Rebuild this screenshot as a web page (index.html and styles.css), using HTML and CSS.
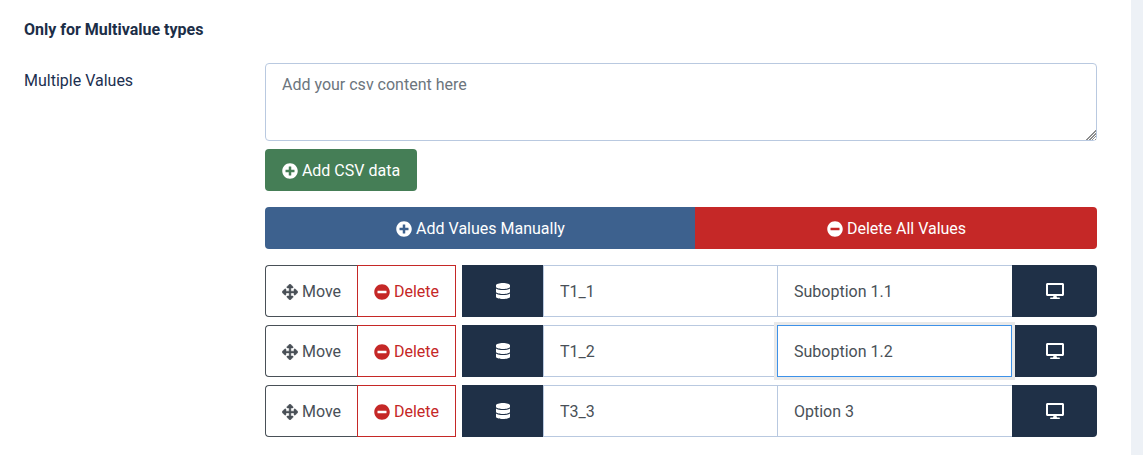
FILE: index.html
```html
<!DOCTYPE html>
<html lang="en">
<head>
<meta charset="utf-8">
<title>Only for Multivalue types</title>
<link rel="stylesheet" href="styles.css">
</head>
<body>
<svg class="defs" aria-hidden="true">
  <symbol id="i-plus" viewBox="0 0 512 512"><path d="M256 8C119 8 8 119 8 256s111 248 248 248 248-111 248-248S393 8 256 8zm144 276c0 6.6-5.4 12-12 12h-92v92c0 6.6-5.4 12-12 12h-56c-6.6 0-12-5.4-12-12v-92h-92c-6.6 0-12-5.4-12-12v-56c0-6.6 5.4-12 12-12h92v-92c0-6.6 5.4-12 12-12h56c6.6 0 12 5.4 12 12v92h92c6.6 0 12 5.4 12 12v56z"/></symbol>
  <symbol id="i-minus" viewBox="0 0 512 512"><path d="M256 8C119 8 8 119 8 256s111 248 248 248 248-111 248-248S393 8 256 8zM124 296c-6.6 0-12-5.4-12-12v-56c0-6.6 5.4-12 12-12h264c6.6 0 12 5.4 12 12v56c0 6.6-5.4 12-12 12H124z"/></symbol>
  <symbol id="i-move" viewBox="0 0 512 512"><path d="M352.201 425.775l-79.196 79.196c-9.373 9.373-24.568 9.373-33.941 0l-79.196-79.196c-15.119-15.119-4.411-40.971 16.971-40.97h51.162L228 284H127.196v51.162c0 21.382-25.851 32.09-40.971 16.971L7.029 272.937c-9.373-9.373-9.373-24.569 0-33.941L86.225 159.8c15.119-15.119 40.971-4.411 40.971 16.971V228H228V127.196h-51.23c-21.382 0-32.09-25.851-16.971-40.971l79.196-79.196c9.373-9.373 24.568-9.373 33.941 0l79.196 79.196c15.119 15.119 4.411 40.971-16.971 40.971h-51.162V228h100.804v-51.162c0-21.382 25.851-32.09 40.97-16.971l79.196 79.196c9.373 9.373 9.373 24.569 0 33.941L425.773 352.2c-15.119 15.119-40.971 4.411-40.97-16.971V284H284v100.804h51.23c21.382 0 32.09 25.851 16.971 40.971z"/></symbol>
  <symbol id="i-db" viewBox="0 0 448 512"><path d="M448 73.143v45.714C448 159.143 347.667 192 224 192S0 159.143 0 118.857V73.143C0 32.857 100.333 0 224 0s224 32.857 224 73.143zM448 176v102.857C448 319.143 347.667 352 224 352S0 319.143 0 278.857V176c48.125 33.143 136.208 48.572 224 48.572S399.874 209.143 448 176zm0 160v102.857C448 479.143 347.667 512 224 512S0 479.143 0 438.857V336c48.125 33.143 136.208 48.572 224 48.572S399.874 369.143 448 336z"/></symbol>
  <symbol id="i-desktop" viewBox="0 0 576 512"><path d="M528 0H48C21.5 0 0 21.5 0 48v320c0 26.5 21.5 48 48 48h192l-16 48h-72c-13.3 0-24 10.7-24 24s10.7 24 24 24h272c13.3 0 24-10.7 24-24s-10.7-24-24-24h-72l-16-48h192c26.5 0 48-21.5 48-48V48c0-26.5-21.5-48-48-48zm-16 352H64V64h448v288z"/></symbol>
</svg>
<div class="page">
  <main class="main">
    <h2 class="heading">Only for Multivalue types</h2>
    <div class="field">
      <label class="label" for="csv">Multiple Values</label>
      <div class="control">
        <textarea id="csv" class="csv" placeholder="Add your csv content here"></textarea>
        <button type="button" class="btn btn-green"><svg class="icon"><use href="#i-plus"/></svg>Add CSV data</button>
        <div class="bulk">
          <button type="button" class="bulk-btn bulk-add"><svg class="icon"><use href="#i-plus"/></svg>Add Values Manually</button>
          <button type="button" class="bulk-btn bulk-del"><svg class="icon"><use href="#i-minus"/></svg>Delete All Values</button>
        </div>
        <div class="rows">
          <div class="row">
            <button type="button" class="act act-move"><svg class="icon icon-bold"><use href="#i-move"/></svg>Move</button>
            <button type="button" class="act act-del"><svg class="icon"><use href="#i-minus"/></svg>Delete</button>
            <span class="addon addon-db"><svg class="icon-db"><use href="#i-db"/></svg></span>
            <input class="cell cell-a" value="T1_1">
            <input class="cell cell-b" value="Suboption 1.1">
            <span class="addon addon-end"><svg class="icon-desk"><use href="#i-desktop"/></svg></span>
          </div>
          <div class="row">
            <button type="button" class="act act-move"><svg class="icon icon-bold"><use href="#i-move"/></svg>Move</button>
            <button type="button" class="act act-del"><svg class="icon"><use href="#i-minus"/></svg>Delete</button>
            <span class="addon addon-db"><svg class="icon-db"><use href="#i-db"/></svg></span>
            <input class="cell cell-a" value="T1_2">
            <input class="cell cell-b cell-focus" value="Suboption 1.2">
            <span class="addon addon-end"><svg class="icon-desk"><use href="#i-desktop"/></svg></span>
          </div>
          <div class="row">
            <button type="button" class="act act-move"><svg class="icon icon-bold"><use href="#i-move"/></svg>Move</button>
            <button type="button" class="act act-del"><svg class="icon"><use href="#i-minus"/></svg>Delete</button>
            <span class="addon addon-db"><svg class="icon-db"><use href="#i-db"/></svg></span>
            <input class="cell cell-a" value="T3_3">
            <input class="cell cell-b" value="Option 3">
            <span class="addon addon-end"><svg class="icon-desk"><use href="#i-desktop"/></svg></span>
          </div>
        </div>
      </div>
    </div>
  </main>
  <aside class="strip"></aside>
</div>
</body>
</html>
```
FILE: styles.css
```css
* { box-sizing: border-box; }
html, body { margin: 0; height: 100%; overflow: hidden; }
body {
  font-family: Roboto, "Liberation Sans", sans-serif;
  font-size: 16px;
  line-height: 24px;
  color: #495057;
  background: #fff;
}
.defs { display: none; }
.page { display: flex; height: 455px; }
.main { flex: 1 1 auto; min-width: 0; padding: 20px 34px 0 24px; }
.strip { flex: 0 0 12px; background: #edf1f6; }

.heading {
  margin: 0 0 24px;
  font-size: 16px;
  font-weight: 700;
  line-height: 19px;
  color: #1c2e47;
}
.field { display: grid; grid-template-columns: 241px 1fr; }
.label { padding-top: 6px; color: #1c3050; }
.control { min-width: 0; }

.csv {
  display: block;
  width: 100%;
  height: 78px;
  padding: 9px 16px 7px;
  border: 1px solid #b9c9e0;
  border-radius: 4px;
  font: inherit;
  color: #495057;
  background: #fff;
  outline: none;
}
.csv::placeholder { color: #6c757d; opacity: 1; }
.csv::-webkit-resizer {
  background:
    linear-gradient(135deg, #fff 13.4px, transparent 13.4px),
    repeating-linear-gradient(135deg, #8d8d8d 0 1px, #fff 1px 2px);
}

button { font: inherit; cursor: pointer; }
.icon { width: 16px; height: 16px; margin-right: 4px; fill: currentColor; flex: none; }
.icon-bold { stroke: currentColor; stroke-width: 14px; }

.btn {
  display: inline-flex;
  align-items: center;
  justify-content: center;
  height: 42px;
  width: 152px;
  margin-top: 8px;
  padding: 2px 0 0;
  border: 0;
  border-radius: 4px;
}
.btn-green { background: #457e56; color: #fff; }

.bulk { display: flex; margin-top: 16px; }
.bulk-btn {
  display: flex;
  align-items: center;
  justify-content: center;
  height: 42px;
  padding: 2px 0 0 1px;
  border: 0;
  color: #fff;
}
.bulk-add { flex: 0 0 430px; background: #3d618e; border-radius: 4px 0 0 4px; }
.bulk-del { flex: 1 1 0; background: #c52827; border-radius: 0 4px 4px 0; }

.rows { display: flex; flex-direction: column; gap: 8px; margin-top: 16px; }
.row { display: flex; height: 52px; }
.act {
  display: flex;
  align-items: center;
  justify-content: center;
  height: 52px;
  padding: 2px 0 0;
  background: #fff;
  border: 1px solid;
}
.act-move { width: 92px; color: #495057; border-color: #495057; border-right: 0; border-radius: 4px 0 0 4px; }
.act-del { width: 99px; color: #c52827; border-color: #c52827; margin-right: 6px; }
.addon {
  display: flex;
  align-items: center;
  justify-content: center;
  background: #1f3047;
  color: #fff;
  flex: none;
}
.addon-db { width: 81px; }
.addon-end { width: 85px; border-radius: 0 4px 4px 0; }
.icon-db { width: 14px; height: 16px; fill: currentColor; }
.icon-desk { width: 18px; height: 16px; fill: currentColor; }
.cell {
  min-width: 0;
  height: 52px;
  padding: 0 16px;
  border: 1px solid #b9c9e0;
  border-right: 0;
  font: inherit;
  color: #495057;
  background: #fff;
  outline: none;
}
.cell-a { flex: 0 0 234px; }
.cell-b { flex: 0 0 235px; }
.cell-focus {
  position: relative;
  border: 1px solid #3d91e8;
  box-shadow: 0 0 0 3px #e9e9e9;
}
```
